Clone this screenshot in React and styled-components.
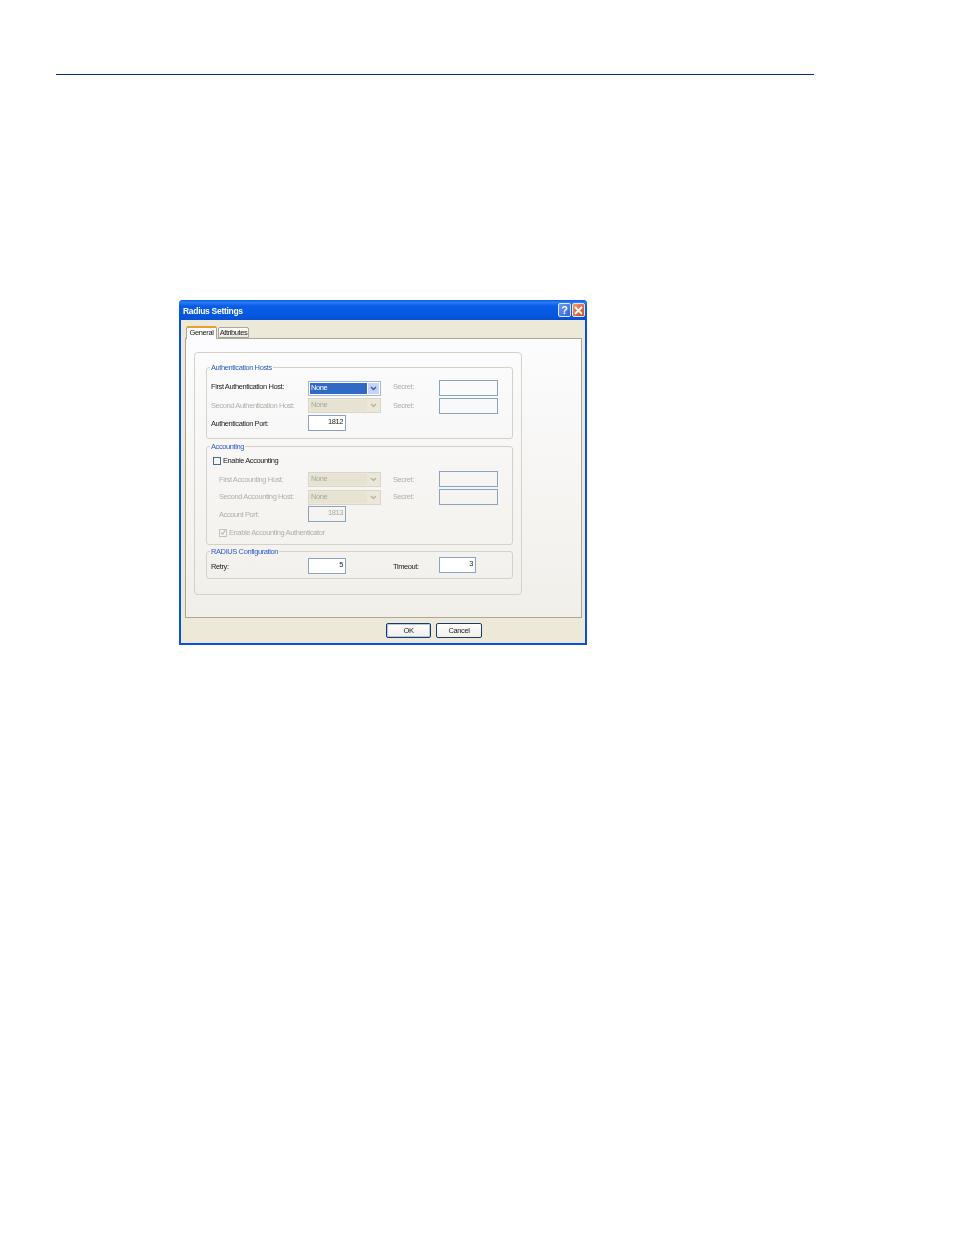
import styled, { createGlobalStyle } from 'styled-components'

const GlobalStyle = createGlobalStyle`
  html, body {
    margin: 0;
    background: #fff;
  }
  * {
    box-sizing: border-box;
  }
`

const Chevron = ({ color }) => (
  <svg width='7' height='5' viewBox='0 0 7 5'>
    <path d='M1 1 L3.5 3.5 L6 1' fill='none' stroke={color} strokeWidth='1.4' />
  </svg>
)

const Combo = ({ active, flush }) => (
  <ComboBox $active={active} $flush={flush}>
    <ComboValue $active={active}>None</ComboValue>
    <ComboArrow $active={active}>
      <Chevron color={active ? '#3c5a9a' : '#b4b2a4'} />
    </ComboArrow>
  </ComboBox>
)

const Row = ({ label, disabled, indent, height, line, children }) => (
  <FieldRow $height={height}>
    <FieldLabel $disabled={disabled} $indent={indent} $line={line}>
      {label}
    </FieldLabel>
    {children}
  </FieldRow>
)

const App = () => (
  <Page>
    <GlobalStyle />
    <Rule />
    <Dialog>
      <TitleBar>
        <TitleText>Radius Settings</TitleText>
        <TitleButtons>
          <HelpButton>?</HelpButton>
          <CloseButton>
            <svg width='9' height='9' viewBox='0 0 9 9'>
              <path d='M1 1 L8 8 M8 1 L1 8' stroke='#fff' strokeWidth='1.8' />
            </svg>
          </CloseButton>
        </TitleButtons>
      </TitleBar>
      <Client>
        <TabStrip>
          <Tab $active>General</Tab>
          <Tab>Attributes</Tab>
        </TabStrip>
        <TabPanel>
          <OuterGroup>
            <Group $pad='8px 0 7px'>
              <Legend>Authentication Hosts</Legend>
              <Row label='First Authentication Host:' line={14}>
                <Combo active />
                <SecretLabel $line={14}>Secret:</SecretLabel>
                <SecretInput />
              </Row>
              <Row label='Second Authentication Host:' disabled height={17} line={16}>
                <Combo flush />
                <SecretLabel $line={16}>Secret:</SecretLabel>
                <SecretInput />
              </Row>
              <Row label='Authentication Port:' height={16} line={18}>
                <NumberBox>1812</NumberBox>
              </Row>
            </Group>
            <Group $pad='4px 0 6px' $mt={2}>
              <Legend>Accounting</Legend>
              <CheckRow $indent={6} $mb={5}>
                <CheckBox />
                <CheckLabel>Enable Accounting</CheckLabel>
              </CheckRow>
              <Row label='First Accounting Host:' disabled indent={8} line={18}>
                <Combo />
                <SecretLabel $line={18}>Secret:</SecretLabel>
                <SecretInput />
              </Row>
              <Row label='Second Accounting Host:' disabled indent={8} height={17} line={16}>
                <Combo />
                <SecretLabel $line={16}>Secret:</SecretLabel>
                <SecretInput />
              </Row>
              <Row label='Account Port:' disabled indent={8} height={16} line={18}>
                <NumberBox $disabled>1813</NumberBox>
              </Row>
              <CheckRow $indent={12} $mt={5}>
                <CheckBox $disabled>
                  <svg width='7' height='7' viewBox='0 0 7 7'>
                    <path d='M1 3.5 L3 5.5 L6 1' fill='none' stroke='#b5b3a6' strokeWidth='1.2' />
                  </svg>
                </CheckBox>
                <CheckLabel $disabled>Enable Accounting Authenticator</CheckLabel>
              </CheckRow>
            </Group>
            <Group $pad='1px 0 4px' $mt={1}>
              <Legend>RADIUS Configuration</Legend>
              <Row label='Retry:' height={17} line={20}>
                <RetryCell>
                  <NumberBox>5</NumberBox>
                </RetryCell>
                <TimeoutLabel>Timeout:</TimeoutLabel>
                <NumberBox $short>3</NumberBox>
              </Row>
            </Group>
          </OuterGroup>
        </TabPanel>
        <Footer>
          <PushButton $default>OK</PushButton>
          <PushButton $wide>Cancel</PushButton>
        </Footer>
      </Client>
    </Dialog>
  </Page>
)

export default App

const Page = styled.div`
  width: 954px;
  height: 1235px;
  padding-top: 74px;
  overflow: hidden;
  font-family: 'Liberation Sans', Arial, sans-serif;
`
const Rule = styled.div`
  width: 758px;
  height: 1px;
  margin-left: 56px;
  background-color: #0a2a78;
`
const Dialog = styled.div`
  width: 408px;
  height: 345px;
  margin: 225px 0 0 179px;
  display: flex;
  flex-direction: column;
  background-color: #0a50d8;
  border-radius: 4px 4px 0 0;
  padding: 0 2px 2px;
  letter-spacing: -0.4px;
  filter: blur(0.35px);
`
const TitleBar = styled.div`
  height: 20px;
  margin: 0 -2px;
  padding: 0 2px 0 4px;
  display: flex;
  align-items: center;
  justify-content: space-between;
  border-radius: 4px 4px 0 0;
  background: linear-gradient(180deg, #0a5ae2 0%, #2a7cf4 12%, #0a5ce6 30%, #0458de 75%, #0a4fd0 100%);
`
const TitleText = styled.span`
  padding-top: 2px;
  color: #fff;
  font-size: 8.5px;
  font-weight: 700;
  letter-spacing: -0.3px;
`
const TitleButtons = styled.div`
  display: flex;
  gap: 1px;
`
const HelpButton = styled.div`
  width: 13px;
  height: 14px;
  display: flex;
  align-items: center;
  justify-content: center;
  border: 1px solid #dfe8fa;
  border-radius: 2px;
  background: linear-gradient(135deg, #6f9af0, #2f62d8);
  color: #fff;
  font-size: 11px;
  font-weight: 700;
`
const CloseButton = styled(HelpButton)`
  background: linear-gradient(135deg, #f09a78, #d8431c);
`
const Client = styled.div`
  flex: 1;
  padding: 5px 3px 0 4px;
  background-color: #ece9d8;
`
const TabStrip = styled.div`
  height: 13px;
  padding-left: 1px;
  display: flex;
  align-items: flex-end;
  gap: 1px;
  position: relative;
  z-index: 1;
`
const Tab = styled.div`
  width: 31px;
  height: ${(p) => (p.$active ? 13 : 11)}px;
  padding-bottom: ${(p) => (p.$active ? 2 : 0)}px;
  display: flex;
  align-items: center;
  justify-content: center;
  font-size: 7.5px;
  color: #222;
  border: 1px solid #a9a898;
  border-bottom: ${(p) => (p.$active ? 'none' : '1px solid #a9a898')};
  border-top: ${(p) => (p.$active ? '2px solid #e8a030' : '1px solid #a9a898')};
  border-radius: 2px 2px 0 0;
  background: ${(p) => (p.$active ? '#fcfcfc' : 'linear-gradient(180deg, #fff, #ece9e0)')};
  margin-bottom: ${(p) => (p.$active ? '-1px' : '0')};
`
const TabPanel = styled.div`
  width: 397px;
  height: 280px;
  padding: 13px 0 0 8px;
  border: 1px solid #a9a898;
  background: linear-gradient(180deg, #fcfcfe 0%, #f1efe9 100%);
`
const OuterGroup = styled.div`
  width: 328px;
  height: 243px;
  padding: 9px 0 0 11px;
  border: 1px solid #d4d2c6;
  border-radius: 4px;
`
const Group = styled.fieldset`
  width: 307px;
  margin: ${(p) => p.$mt || 0}px 0 0;
  padding: ${(p) => p.$pad};
  border: 1px solid #d4d2c6;
  border-radius: 3px;
  min-inline-size: 0;
`
const Legend = styled.legend`
  margin-left: 3px;
  padding: 0 1px;
  height: 10px;
  font-size: 7.5px;
  line-height: 12px;
  color: #2a5cc8;
`
const FieldRow = styled.div`
  height: ${(p) => p.$height || 18}px;
  display: grid;
  grid-template-columns: 101px 73px 12px 46px 59px;
  align-items: start;
`
const FieldLabel = styled.span`
  padding-left: ${(p) => 4 + (p.$indent || 0)}px;
  font-size: 7.5px;
  line-height: ${(p) => p.$line}px;
  color: ${(p) => (p.$disabled ? '#b0afa6' : '#222')};
  white-space: nowrap;
`
const ComboBox = styled.div`
  height: 15px;
  margin-top: ${(p) => (p.$flush ? 0 : 1)}px;
  padding: 1px;
  display: flex;
  gap: 1px;
  border: 1px solid ${(p) => (p.$active ? '#9fb6d6' : '#d8d6c8')};
  background-color: ${(p) => (p.$active ? '#fff' : '#ebe8d8')};
`
const ComboValue = styled.div`
  flex: 1;
  padding-left: 1px;
  font-size: 7.5px;
  line-height: 10px;
  color: ${(p) => (p.$active ? '#fff' : '#aaa99e')};
  background-color: ${(p) => (p.$active ? '#316ac5' : '#e6e3d2')};
`
const ComboArrow = styled.div`
  width: 11px;
  display: flex;
  align-items: center;
  justify-content: center;
  background-color: ${(p) => (p.$active ? '#c4d4f4' : '#ebe8d8')};
`
const SecretLabel = styled.span`
  grid-column: 4;
  font-size: 7.5px;
  line-height: ${(p) => p.$line}px;
  color: #b0afa6;
`
const SecretInput = styled.div`
  grid-column: 5;
  height: 16px;
  border: 1px solid #8aa4bf;
`
const NumberBox = styled.div`
  width: ${(p) => (p.$short ? 37 : 38)}px;
  height: 16px;
  padding-right: 2px;
  text-align: right;
  font-size: 7.5px;
  line-height: 12px;
  color: ${(p) => (p.$disabled ? '#a8a79e' : '#222')};
  border: 1px solid #8aa4bf;
  background-color: ${(p) => (p.$disabled ? 'transparent' : '#fff')};
`
const RetryCell = styled.div`
  grid-column: 2;
  padding-top: 1px;
`
const TimeoutLabel = styled.span`
  grid-column: 4;
  font-size: 7.5px;
  line-height: 20px;
  color: #222;
`
const CheckRow = styled.div`
  height: 11px;
  margin: ${(p) => p.$mt || 0}px 0 ${(p) => p.$mb || 0}px;
  padding-left: ${(p) => p.$indent}px;
  display: flex;
  align-items: center;
  gap: 2px;
`
const CheckBox = styled.div`
  width: 8px;
  height: 8px;
  display: flex;
  align-items: center;
  justify-content: center;
  border: 1px solid ${(p) => (p.$disabled ? '#c6c4b8' : '#4a6a8c')};
  background-color: ${(p) => (p.$disabled ? 'transparent' : '#f6f6f2')};
`
const CheckLabel = styled.span`
  font-size: 7.5px;
  color: ${(p) => (p.$disabled ? '#b0afa6' : '#222')};
  white-space: nowrap;
`
const Footer = styled.div`
  margin-top: 5px;
  padding-left: 201px;
  display: flex;
  gap: 5px;
`
const PushButton = styled.div`
  width: ${(p) => (p.$wide ? 46 : 45)}px;
  height: 15px;
  display: flex;
  align-items: center;
  justify-content: center;
  font-size: 7.5px;
  color: #222;
  border: 1px solid #1c3a70;
  border-radius: 2px;
  background: linear-gradient(180deg, #fff, #f0efe6);
  box-shadow: ${(p) => (p.$default ? 'inset 0 0 0 1px #b4c8ec' : 'none')};
`
